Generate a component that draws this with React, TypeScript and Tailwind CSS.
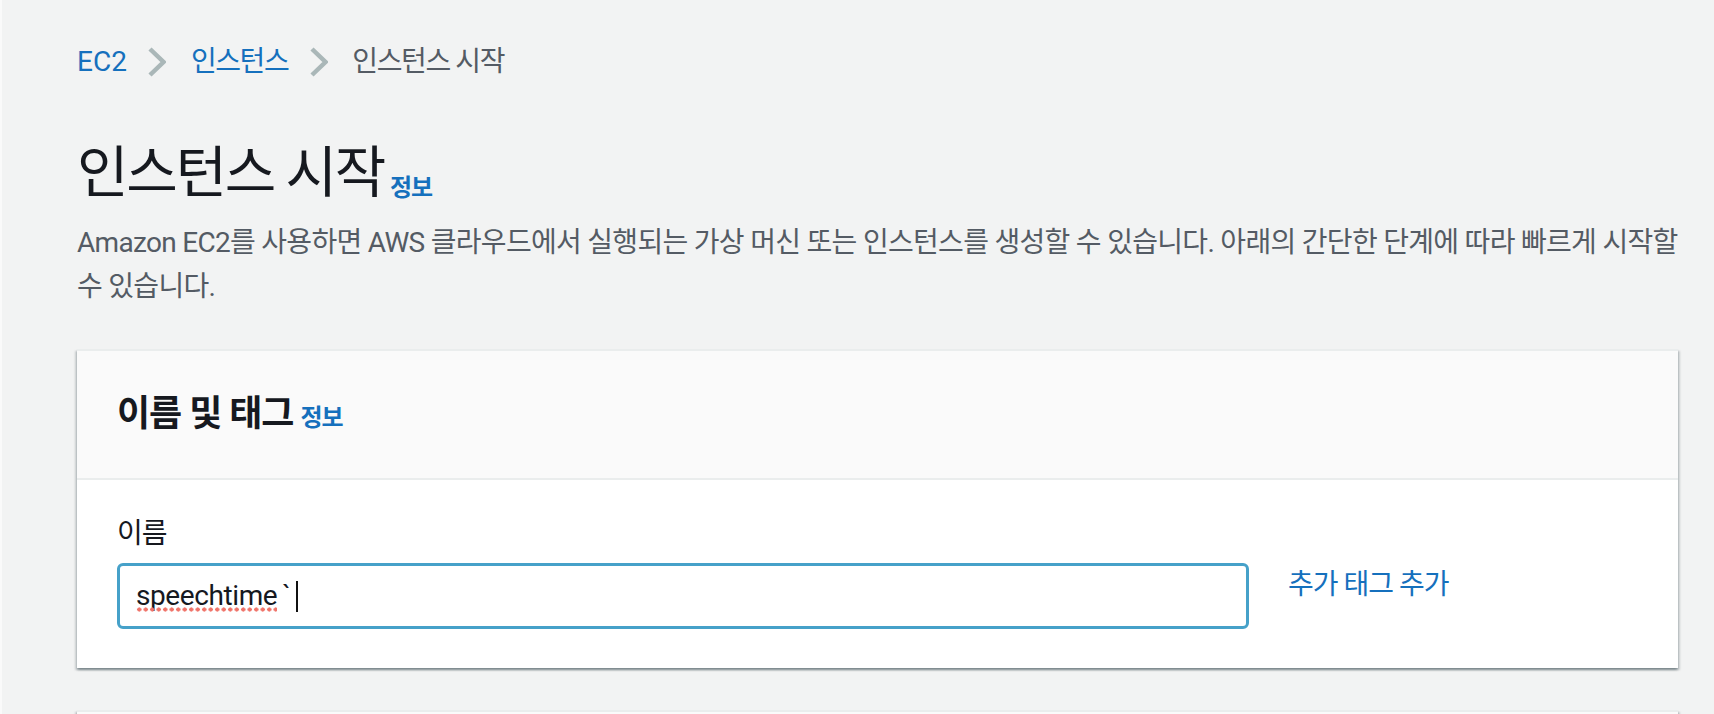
import React from "react";

function Chevron() {
  return (
    <svg width="18" height="30" viewBox="0 0 18 30" className="shrink-0">
      <path d="M2 2 L15.5 15 L2 28" fill="none" stroke="#aab7b8" strokeWidth="4.5" />
    </svg>
  );
}

const shadow =
  "shadow-[0_2px_2px_0_rgba(0,28,36,0.3),2px_2px_2px_0_rgba(0,28,36,0.15),-2px_2px_2px_0_rgba(0,28,36,0.15)]";

export default function App() {
  return (
    <div className="min-h-screen bg-[#f2f3f3] border-l-2 border-[#fafafa] pl-[75px] pr-[36px] pt-[40px] font-[family-name:Roboto,'Noto_Sans_CJK_KR',sans-serif] overflow-hidden">
      {/* Breadcrumb */}
      <nav className="flex items-center text-[28px] leading-[44px] tracking-[-1.4px]">
        <a className="text-[#1570bd] tracking-normal">EC2</a>
        <span className="ml-[21px] mr-[25px] flex items-center">
          <Chevron />
        </span>
        <a className="text-[#1570bd]">인스턴스</a>
        <span className="ml-[22px] mr-[24px] flex items-center">
          <Chevron />
        </span>
        <span className="text-[#545b64]">인스턴스 시작</span>
      </nav>

      {/* Title */}
      <div className="mt-[53px] flex items-baseline">
        <h1 className="text-[56px] leading-[72px] font-normal text-[#16191f] tracking-[-2.3px]">인스턴스 시작</h1>
        <a className="ml-[6px] translate-y-[4px] text-[24px] leading-[28px] font-bold text-[#1570bd] tracking-[-1px]">정보</a>
      </div>

      {/* Description */}
      <p className="mt-[12px] text-[28px] leading-[44px] text-[#545b64] tracking-[-0.7px]">
        <span className="block whitespace-nowrap">
          Amazon EC2를 사용하면 AWS 클라우드에서 실행되는 가상 머신 또는 인스턴스를 생성할 수 있습니다. 아래의 간단한 단계에 따라 빠르게 시작할
        </span>
        <span className="block whitespace-nowrap">수 있습니다.</span>
      </p>

      {/* Card */}
      <section className={`mt-[40px] bg-white border-t-2 border-[#eaeded] ${shadow}`}>
        <div className="bg-[#fafafa] border-b-2 border-[#eaeded] px-[40px] pt-[41px] pb-[42px] flex items-baseline">
          <h2 className="text-[36px] leading-[44px] font-bold text-[#16191f] tracking-[-1px]">이름 및 태그</h2>
          <a className="ml-[7px] text-[24px] leading-[28px] font-bold text-[#1570bd] tracking-[-1px]">정보</a>
        </div>
        <div className="px-[40px] pt-[32px] pb-[39px]">
          <div className="text-[28px] leading-[44px] text-[#16191f] tracking-[-1px]">이름</div>
          <div className="mt-[7px] flex items-start gap-[39px]">
            <div className="w-[1132px] h-[66px] rounded-[6px] border-[3px] border-[#46a1c9] bg-white px-[16px] flex items-center text-[28px] leading-[44px] text-[#16191f]">
              <span className="relative tracking-[-0.4px]">
                speechtime
                <span className="absolute left-0 right-0 top-[33px] h-[5px] bg-[radial-gradient(circle,#f0746a_1.9px,transparent_2.3px)] bg-[length:6.5px_5px]" />
              </span>
              <span className="ml-[5px]">`</span>
              <span className="ml-[5px] inline-block w-[2px] h-[31px] bg-[#111]" />
            </div>
            <a className="text-[28px] leading-[44px] text-[#1570bd] whitespace-nowrap tracking-[-1px]">추가 태그 추가</a>
          </div>
        </div>
      </section>

      <section className={`mt-[42px] h-[60px] bg-[#fafafa] border-t-2 border-[#eaeded] ${shadow}`} />
    </div>
  );
}
